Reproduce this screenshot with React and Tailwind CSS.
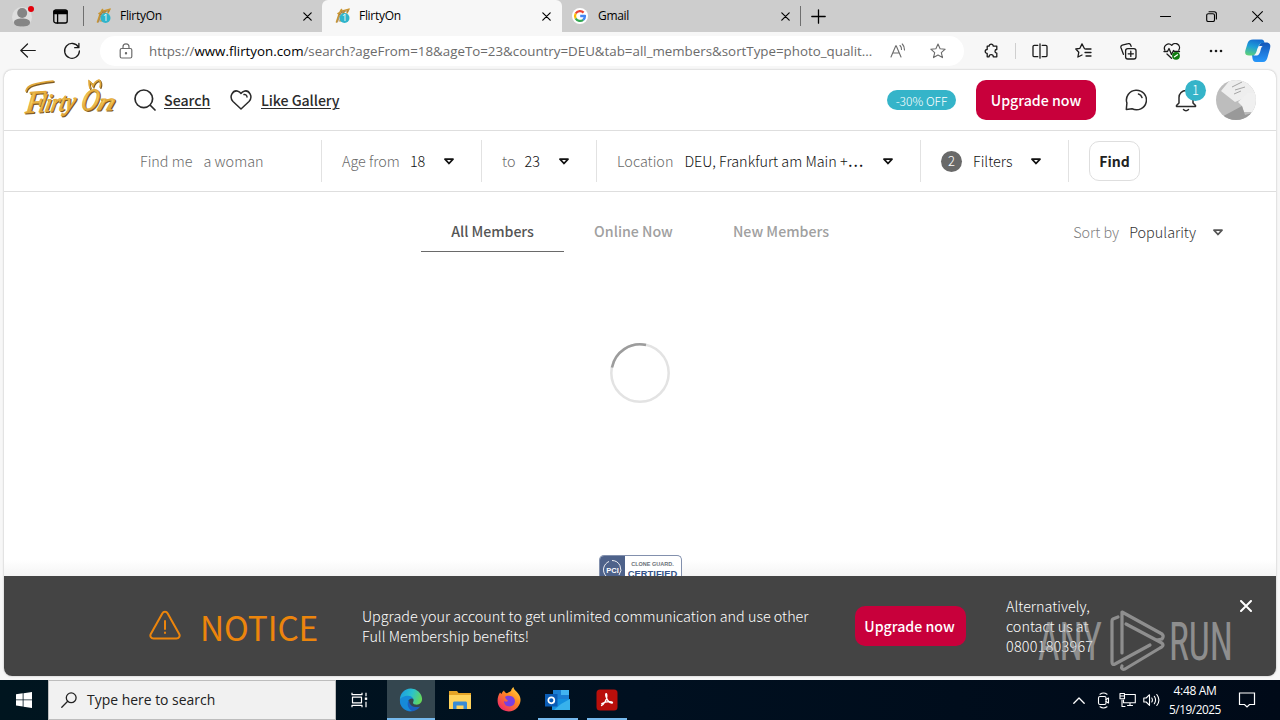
import React from 'react';

const CJK = "font-['Noto_Sans_CJK_JP','Noto_Sans',sans-serif]";
const UI = "font-['Open_Sans','Noto_Sans',sans-serif]";

function Svg({ w, h = w, vb, className = '', children, sw = 1.3 }) {
  return (
    <svg width={w} height={h} viewBox={vb || `0 0 ${w} ${h}`} fill="none" stroke="currentColor" strokeWidth={sw} strokeLinecap="round" strokeLinejoin="round" className={`shrink-0 ${className}`}>
      {children}
    </svg>
  );
}

function CloseX({ className = '' }) {
  return (
    <Svg w={9} sw={1.2} className={className}>
      <path d="M.8.8l7.4 7.4M8.2.8L.8 8.2" />
    </Svg>
  );
}

function Favicon() {
  return (
    <Svg w={16} sw={1.6}>
      <path d="M1.5 14C3 10 4 5 6.500 1.500M3 5.500C6 3 9 2 13 1.500M5 13C6 9 7 7 9 4M12 5l2-4" stroke="#c99532" />
      <path d="M2.600 14C4 10 5 6 7.500 3M4 7C7 4 10 3 13 3" stroke="#8b6a36" strokeWidth=".7" />
      <circle cx="9.500" cy="10" r="5" fill="#2fb4cb" stroke="none" />
      <text x="9.500" y="13.200" fill="#fff" stroke="none" fontSize="9" fontFamily="Open Sans" textAnchor="middle">1</text>
    </Svg>
  );
}

function GoogleMark() {
  return (
    <Svg w={16} sw={2.300}>
      <circle cx="8" cy="8" r="8" fill="#fff" stroke="none" />
      <g strokeLinecap="butt">
        <path d="M11.600 4.600A5 5 0 0 0 3.700 5.500" stroke="#ea4335" />
        <path d="M3.700 5.500A5 5 0 0 0 3.700 10.500" stroke="#fbbc05" />
        <path d="M3.700 10.500A5 5 0 0 0 11.200 11.800" stroke="#34a853" />
        <path d="M11.200 11.800A5 5 0 0 0 13 8H8.200" stroke="#4285f4" />
      </g>
    </Svg>
  );
}

function TabStrip() {
  return (
    <div className={`flex h-8 shrink-0 bg-[#cdcdcd] text-xs tracking-[-.3px] text-black ${UI}`}>
      <div className="flex w-[84px] shrink-0 items-center pl-3">
        <Svg w={24} h={22} sw={0} className="-mt-px">
          <circle cx="10" cy="12" r="10" fill="#dedede" />
          <circle cx="10.200" cy="8" r="5" fill="#858585" />
          <path d="M2 17.500c0-3 3.500-4 8-4s8 1 8 4-3.500 4-8 4-8-1-8-4z" fill="#858585" />
          <circle cx="19" cy="4" r="3" fill="#e3000b" />
        </Svg>
        <Svg w={15} className="ml-[17px]" sw={1.300}>
          <rect x=".8" y="1" width="13.400" height="13" rx="2" />
          <path d="M1 2h13v2.600H1z" fill="currentColor" />
          <path d="M4.600 5v9" />
        </Svg>
        <div className="ml-[15px] h-5 w-px bg-[#6f6f6f]" />
      </div>
      <div className="flex w-[238px] shrink-0 items-center pr-[10px] pl-3">
        <Favicon />
        <span className="ml-2 flex-1">FlirtyOn</span>
        <CloseX />
      </div>
      <div className="flex w-[240px] shrink-0 items-center rounded-t-md bg-[#f7f7f7] pr-[11px] pl-[13px]">
        <Favicon />
        <span className="ml-2 flex-1">FlirtyOn</span>
        <CloseX />
      </div>
      <div className="flex w-[238px] shrink-0 items-center pr-[10px] pl-[10px]">
        <GoogleMark />
        <span className="ml-[10px] flex-1">Gmail</span>
        <CloseX />
      </div>
      <div className="flex flex-1 items-center">
        <div className="h-5 w-px bg-[#6f6f6f]" />
        <Svg w={15} className="ml-[10px]"><path d="M7.500.8v13.400M.8 7.500h13.400" /></Svg>
        <div className="ml-auto flex items-center pr-[17px]">
          <Svg w={11} sw={1.100}><path d="M.500 5.500h10" /></Svg>
          <Svg w={11} sw={1.100} className="ml-[35px]">
            <rect x=".7" y="2.700" width="7.800" height="7.800" rx="1.600" />
            <path d="M3 .7h5.200a2.200 2.200 0 0 1 2.200 2.200v5" />
          </Svg>
          <Svg w={11} sw={1.100} className="ml-[35px]"><path d="M.600.600l9.800 9.800M10.400.600L.600 10.400" /></Svg>
        </div>
      </div>
    </div>
  );
}

const STAR = 'M8 1l2.100 4.700 5.100.5-3.900 3.400 1.200 5L8 12l-4.500 2.600 1.200-5L.8 6.200l5.100-.5z';

function Toolbar() {
  return (
    <div className="flex h-[38px] shrink-0 items-center bg-[#f7f7f7] text-[#1b1b1b]">
      <Svg w={16} className="ml-5" sw={1.200}><path d="M15.300 7.500H1M7.500 1L.8 7.500 7.500 14" /></Svg>
      <Svg w={18} className="ml-[27px]"><path d="M15.500 5.300A7.400 7.400 0 1 0 16.400 9M15.900 1.500v4.200h-4.200" /></Svg>
      <div className="ml-[19px] flex h-[30px] w-[864px] items-center rounded-full bg-white pl-[19px] text-[#6b6b6b]">
        <Svg w={14} h={16} sw={1.200}>
          <rect x="1.200" y="5.500" width="11.600" height="9.500" rx="1.500" />
          <path d="M4 5.500V3.800a3 3 0 0 1 6 0v1.700" />
          <circle cx="7" cy="10.200" r=".6" fill="currentColor" />
        </Svg>
        <span className={`ml-4 w-[725px] text-[13.34px] whitespace-nowrap ${UI}`}>https://<span className="text-black">www.flirtyon.com</span>/search?ageFrom=18&amp;ageTo=23&amp;country=DEU&amp;tab=all_members&amp;sortType=photo_qualit...</span>
        <Svg w={16} className="ml-4" sw={1.100}>
          <path d="M1 14L5.800 2.800h.4L11 14M2.700 10h6.600M10 2.500a5 5 0 0 1 1.500 4M12.300 1a8 8 0 0 1 2.200 6" />
        </Svg>
        <Svg w={16} className="ml-6" sw={1.100}><path d={STAR} /></Svg>
      </div>
      <Svg w={16} className="ml-[19px]">
        <path d="M4.200 3.200h1.900a2.100 2.100 0 1 1 4.200 0h3.500V6.500a1.800 1.800 0 1 0 0 3.600v3.700h-3.500a2.100 2.100 0 1 0-4.200 0H4.200v-3.300a2 2 0 1 1 0-4z" />
      </Svg>
      <div className="ml-4 h-4 w-px bg-[#cfcfcf]" />
      <Svg w={16} className="ml-4"><path d="M5.800 2.300H2.300a1.300 1.300 0 0 0-1.300 1.300v8.800a1.300 1.300 0 0 0 1.300 1.300h3.500M10.200 2.300h3.500a1.300 1.300 0 0 1 1.300 1.300v8.800a1.300 1.300 0 0 1-1.300 1.300h-3.500M8 .8v14.400" /></Svg>
      <Svg w={17} h={16} className="ml-[27px]"><path d="M9.500 5.700L7 .9 4.900 5.300.8 6l3 3.200-.9 4.800L7 12M10.500 6h5.500M10 9.500h6M11 13h5" /></Svg>
      <Svg w={17} className="ml-7">
        <rect x="5.600" y="5.600" width="10.400" height="10.400" rx="2.200" />
        <path d="M10.800 8.200v5.200M8.200 10.800h5.200M3.400 11.300L1 4.700a2 2 0 0 1 1.200-2.500l6-1.500a2 2 0 0 1 2.500 1.400l.4 1.200" />
      </Svg>
      <Svg w={18} h={17} className="ml-[26px]">
        <path d="M1.800 7A4.200 4.200 0 0 1 8.700 2.400 4.200 4.200 0 0 1 15.800 7M1 8.500h3.500l1.500-3 2.500 6 2-4 .8 1h5.200M4 11l4.500 4.300" />
        <circle cx="13" cy="12.800" r="3.900" fill="#107c10" stroke="none" />
        <path d="M11.500 13.800l3-2" stroke="#fff" />
      </Svg>
      <Svg w={14} h={4} className="ml-7" sw={0}>
        <g fill="currentColor"><circle cx="2" cy="2" r="1.300" /><circle cx="7" cy="2" r="1.300" /><circle cx="12" cy="2" r="1.300" /></g>
      </Svg>
      <Svg w={26} className="ml-[22px]" sw={0}>
        <defs>
          <linearGradient id="cpa" x1=".5" y1="0" x2=".2" y2="1"><stop offset="0" stopColor="#176fd0" /><stop offset=".45" stopColor="#1f9fd8" /><stop offset="1" stopColor="#5fd277" /></linearGradient>
          <linearGradient id="cpb" x1="0" y1="0" x2="0" y2="1"><stop offset="0" stopColor="#1556b8" /><stop offset="1" stopColor="#2797fa" /></linearGradient>
        </defs>
        <path d="M18 24h-7c-2.500 0-3-1.500-3.500-3.500L7 17c2.500 0 4.500-1.500 5.500-4.500L14 8c.6-2 2-3.500 4-3.500h3c4 0 5 2.500 4 6l-2.500 9c-.7 2.500-2 4.500-4.500 4.500z" fill="url(#cpb)" />
        <path d="M8 1.500h8.500c2 0 2.700 1.500 3 3.500h-1.500c-2.500 0-4 1.500-4.700 4l-1.300 4.500c-.8 2.500-2.500 4-5 4H4c-3.500 0-4.500-2.300-3.500-5.500l2-6.500C3.300 3 5 1.500 8 1.500z" fill="url(#cpa)" />
        <path d="M14.500 8h3.200c-1.500 1-1.600 2.500-2.200 4.500-.8 2.800-1.500 4.500-3.500 5H8.500c2.200-1 2.800-3 3.500-5.500.6-2 1-3.200 2.500-4z" fill="#f7f7f7" />
      </Svg>
    </div>
  );
}

function LogoWords({ fill, stroke, sw }) {
  return (
    <g fontFamily="Liberation Serif, serif" fontStyle="italic" fill={fill} stroke={stroke} strokeWidth={sw} strokeLinejoin="round">
      <text transform="translate(1 34) rotate(-4) skewX(-10)" fontSize="31">F</text>
      <text transform="translate(14 33) rotate(-4) skewX(-16)" fontSize="25" textLength="36" lengthAdjust="spacingAndGlyphs">lirty</text>
      <text transform="translate(56 31) skewX(-12)" fontSize="31" textLength="17" lengthAdjust="spacingAndGlyphs">O</text>
      <text transform="translate(72 31) skewX(-18)" fontSize="24" textLength="17" lengthAdjust="spacingAndGlyphs">n</text>
    </g>
  );
}

function Logo() {
  return (
    <svg width="92" height="42" viewBox="0 0 92 42" className="shrink-0 overflow-visible">
      <defs>
        <linearGradient id="gold" x1="0" y1="0" x2="0" y2="1"><stop offset="0" stopColor="#e0a836" /><stop offset=".5" stopColor="#f8cf60" /><stop offset="1" stopColor="#c98f25" /></linearGradient>
      </defs>
      <g transform="translate(.9 1)">
        <LogoWords fill="#7d5a24" stroke="#7d5a24" sw="1.200" />
        <path d="M2 12C3 7 9 4 29 2M66 9c-1-2-1-5-1-7 2 1 3 3 4 5 1-3 3-5 6-6 2 2 2 4 1 7" fill="none" stroke="#7d5a24" strokeWidth="1.800" strokeLinecap="round" />
      </g>
      <LogoWords fill="url(#gold)" stroke="#e3ab3b" sw=".9" />
      <path d="M2 12C3 7 9 4 29 2M66 9c-1-2-1-5-1-7 2 1 3 3 4 5 1-3 3-5 6-6 2 2 2 4 1 7" fill="none" stroke="#e0a738" strokeWidth="1.700" strokeLinecap="round" />
    </svg>
  );
}

function SiteHeader() {
  return (
    <div className="flex h-[61px] shrink-0 items-center border-b border-[#dedede] px-5 text-[14.2px] font-medium text-[#2b2b2b]">
      <Logo />
      <Svg w={22} className="ml-[18px]" sw={1.700}><circle cx="9.800" cy="9.800" r="8.800" /><path d="M16.500 16.500l4.500 4.500" /></Svg>
      <span className="ml-2 w-[47px] pt-[2px] underline underline-offset-2">Search</span>
      <Svg w={22} h={20} className="ml-[19px]" sw={1.500}>
        <path d="M11 19L3 11.500C-1.500 6.500 3-.5 8 1.200c1.300.4 2.300 1.300 3 2.300.7-1 1.700-1.900 3-2.300 5-1.700 9.500 5.300 5 10.300zM14 4.500c1.500-.3 3 .8 3 2.500" />
      </Svg>
      <span className="ml-[9px] pt-[2px] tracking-[-.08px] underline underline-offset-2">Like Gallery</span>
      <span className="mr-5 ml-auto flex h-5 w-[69px] items-center justify-center rounded-full bg-[#35b4c9] pt-px text-[12px] font-light text-white">-30% OFF</span>
      <button className="h-10 w-[120px] rounded-[10px] bg-[#c8003b] pt-[2px] text-white">Upgrade now</button>
      <Svg w={22} className="ml-[29px]" sw={1.500}>
        <path d="M1.300 20.500l.6-6.500A10 9.800 0 1 1 7 19.800zM13.500 5c1.800.5 3 1.800 3.500 3.500" />
      </Svg>
      <div className="relative ml-7">
        <Svg w={22} h={24} className="mt-[1px]" sw={1.500}>
          <path d="M4 14V8.500a7 7 0 0 1 14 0V14l2.500 2.500v1H1.500v-1zM8.500 20.500c1.300 1.500 3.700 1.500 5 0" />
        </Svg>
        <span className="absolute -top-[8px] left-[10px] flex size-[21px] items-center justify-center rounded-full bg-[#35b4c9] text-[13px] font-light text-white">1</span>
      </div>
      <svg width="40" height="40" viewBox="0 0 40 40" className="ml-[19px] shrink-0">
        <defs><clipPath id="av"><circle cx="20" cy="20" r="20" /></clipPath></defs>
        <g clipPath="url(#av)">
          <path d="M0 0h40v40H0z" fill="#bdbdbd" />
          <path d="M5 11L14 0h26v18l-9-1-12 5z" fill="#eeeeee" />
          <path d="M22 22l10-9h9v19H28l-2-6z" fill="#f0f0f0" />
          <path d="M0 40l26-14 3 9 11-3v8z" fill="#999" />
          <path d="M16 7l10-5M19 10l10-3M18 14l7-3" stroke="#a4a4a4" strokeWidth="1" />
        </g>
      </svg>
    </div>
  );
}

function Caret({ className = '' }) {
  return (
    <Svg w={10} h={7} sw={1.800} className={className}><path d="M1 1.200h8L5 5.500z" /></Svg>
  );
}

function FilterBar() {
  return (
    <div className="flex h-[61px] shrink-0 items-center border-b border-[#dedede] pl-[136px] text-[14.4px] font-light text-[#111]">
      <div className="flex h-[42px] w-[182px] items-center gap-[11px] border-r border-[#e2e2e2] text-[#6a6a6a]">
        <span>Find me</span><span>a woman</span>
      </div>
      <div className="flex h-[42px] w-40 items-center border-r border-[#e2e2e2] pl-5">
        <span className="text-[#6a6a6a]">Age from</span><span className="ml-[10px]">18</span><Caret className="ml-[19px]" />
      </div>
      <div className="flex h-[42px] w-[115px] items-center border-r border-[#e2e2e2] pl-5">
        <span className="text-[#6a6a6a]">to</span><span className="ml-[9px]">23</span><Caret className="ml-[19px]" />
      </div>
      <div className="flex h-[42px] w-[324px] items-center border-r border-[#e2e2e2] pl-5">
        <span className="text-[#6a6a6a]">Location</span><span className="ml-[11px] w-[180px] whitespace-nowrap">DEU, Frankfurt am Main +<span className="font-medium">⋯</span></span><Caret className="ml-[19px]" />
      </div>
      <div className="flex h-[42px] w-[148px] items-center border-r border-[#e2e2e2] pl-5">
        <span className="flex size-[21px] items-center justify-center rounded-full bg-[#696969] text-[13px] text-white">2</span>
        <span className="ml-[11px]">Filters</span><Caret className="ml-[19px]" />
      </div>
      <button className="ml-5 h-10 w-[51px] rounded-[10px] border border-[#dedede] text-[14px] font-bold text-[#222]">Find</button>
    </div>
  );
}

function Members() {
  return (
    <div className="flex min-h-0 flex-1 flex-col">
      <div className="flex h-[60px] shrink-0 items-end pr-[53px] pl-[417px] text-[14.2px] font-medium text-[#a0a0a0]">
        <span className="flex h-10 w-[143px] items-center justify-center border-b border-[#6a6a6a] tracking-[-.05px] text-[#555]">All Members</span>
        <span className="flex h-10 w-[139px] items-center justify-center">Online Now</span>
        <span className="flex h-10 w-[156px] items-center justify-center">New Members</span>
        <div className="ml-auto flex h-10 items-center text-[14.4px] font-light text-[#333]">
          <span className="text-[#808080]">Sort by</span><span className="ml-[10px]">Popularity</span><Caret className="mt-px ml-[17px] text-[#555]" />
        </div>
      </div>
      <div className="flex min-h-0 flex-1 flex-col items-center bg-linear-to-b from-white from-95% to-[#f4f4f4]">
        <svg width="60" height="60" viewBox="0 0 60 60" fill="none" strokeWidth="2.500" className="mt-[91px] shrink-0">
          <circle cx="30" cy="30" r="28.700" stroke="#e3e3e3" />
          <path d="M2 24.500A28.700 28.700 0 0 1 36 2" stroke="#9c9c9c" />
        </svg>
        <div className="mt-[152px] flex h-[21px] w-[83px] shrink-0 overflow-hidden rounded-t-[5px] border border-b-0 border-[#8290ad] bg-white">
          <div className="w-[25px] shrink-0 bg-[#4e628a]">
            <svg width="25" height="21" viewBox="0 0 25 21">
              <path d="M6 20A9 9 0 0 1 9 5.500M12 4.500A9 9 0 0 1 19 19" fill="none" stroke="#fff" strokeWidth=".9" />
              <text x="12.500" y="16.500" fontFamily="Liberation Sans" fontWeight="700" fontSize="7.500" fill="#fff" textAnchor="middle">PCI</text>
            </svg>
          </div>
          <div className="flex flex-1 flex-col items-center pt-[5px] font-['Liberation_Sans',sans-serif] font-bold whitespace-nowrap">
            <span className="text-[5.5px] leading-[7px] text-[#6b7078]">CLONE GUARD.</span>
            <span className="text-[9.4px] leading-[11px] text-[#36548a]">CERTIFIED</span>
          </div>
        </div>
      </div>
    </div>
  );
}

function Notice() {
  return (
    <div className="flex h-[100px] shrink-0 bg-[#444] pl-[145px] text-[14.37px] leading-5 font-light text-white">
      <div className="flex w-[213px] items-center text-[#ec850c]">
        <Svg w={32} h={32} sw={2}>
          <path d="M13.300 3.400c1.200-2.200 4.200-2.200 5.400 0l11.500 20.500c1.200 2.200-.2 4.600-2.700 4.600H4.500c-2.500 0-3.900-2.400-2.700-4.600zM16 11v8M16 22.500v.600" />
        </Svg>
        <span className="ml-[19px] pt-px text-[33.4px] font-normal tracking-[-.1px]">NOTICE</span>
      </div>
      <p className="w-[493px] pt-[30px]">Upgrade your account to get unlimited communication and use other<br />Full Membership benefits!</p>
      <button className="mt-[30px] h-10 w-[111px] shrink-0 rounded-[10px] bg-[#c8003b] pr-[2px] text-[14.2px] font-medium">Upgrade now</button>
      <p className="ml-10 w-[110px] shrink-0 pt-5">Alternatively,<br />contact us at<br /><span className="tracking-[.25px]">08001803967</span></p>
      <Svg w={12} sw={2} className="mt-6 mr-[24px] ml-auto"><path d="M1 1l10 10M11 1L1 11" /></Svg>
    </div>
  );
}

function TaskIcon({ children, open, className = '' }) {
  return (
    <div className={`flex h-10 flex-col items-center ${className}`}>
      <div className="flex flex-1 items-center justify-center pt-[2px]">{children}</div>
      <div className={open ? 'h-[2px] w-10 bg-[#76b9ed]' : 'h-[2px]'} />
    </div>
  );
}

function Taskbar() {
  return (
    <div className={`flex h-10 shrink-0 items-center bg-linear-to-r from-[#00151f] via-[#001020] to-[#000a18] text-white ${UI}`}>
      <TaskIcon className="w-12">
        <Svg w={16} sw={0}><path d="M0 2.300L6.700 1.300v6.200H0zM7.500 1.200L16 0v7.500H7.500zM0 8.300h6.700v6.300L0 13.600zM7.500 8.300H16V16l-8.500-1.300z" fill="#fff" /></Svg>
      </TaskIcon>
      <div className="flex h-10 w-72 items-center border border-[#bdbdbd] bg-[#f1f1f1] pl-3 text-[#222]">
        <Svg w={16}><circle cx="10.200" cy="5.800" r="4.900" /><path d="M6.700 9.300L.8 15.200" /></Svg>
        <span className="ml-[10px] pt-px text-[13.95px]">Type here to search</span>
      </div>
      <TaskIcon className="w-[51px] pr-1">
        <Svg w={17} h={16} sw={1.200}>
          <path d="M1 .7v2h10v-2M1 15.300v-2h10v2M1.500 5.200h9v5.600h-9zM15 .7v3.500M15 9.800v5.500" strokeLinecap="butt" /><path d="M13.800 5.500h2.400v2.400h-2.400z" fill="#fff" stroke="none" />
        </Svg>
      </TaskIcon>
      <div className="flex h-10 w-12 items-center justify-center border-b-2 border-[#76b9ed] bg-[#34464f] pt-[2px]">
        <Svg w={24} vb="0 0 26 26" sw={0}>
          <defs><linearGradient id="edg" x1="0" y1=".3" x2="1" y2=".6"><stop offset="0" stopColor="#1c9de0" /><stop offset=".5" stopColor="#2bc2cc" /><stop offset="1" stopColor="#66d856" /></linearGradient></defs>
          <path d="M1 13A12 12 0 0 0 23 20c-6 2-12-1-12-6z" fill="#1b5fc0" />
          <path d="M1 14C1 9 6 6.500 10 7c4 .4 6 3 6 5.500-1.500-2-5-1-6 1.500-1.500 4 0 8.500 4 10.700C7 26 1 20.500 1 14z" fill="#168ad8" />
          <path d="M1 13A12 12 0 0 1 25 12c0 4-3 6.500-7 6-2.500-.3-3.500-1.500-2.500-3C17 12 14 8.500 10 8.500 5.500 8.500 2 10.500 1 13z" fill="url(#edg)" />
        </Svg>
      </div>
      <TaskIcon className="w-[50px]">
        <Svg w={22} h={20} sw={0}>
          <path d="M0 1h8l1.500 2H22v4H0z" fill="#e5a426" /><path d="M0 5h22v14H0z" fill="#ffd35c" />
          <path d="M4 19v-6c0-1 .7-1.500 1.500-1.500h11c.8 0 1.500.500 1.500 1.500v6h-3.500v-3.500h-7V19z" fill="#388bd5" />
        </Svg>
      </TaskIcon>
      <TaskIcon className="w-12 pb-px">
        <Svg w={24} h={25} sw={0}>
          <defs><linearGradient id="fx" x1="1" y1="0" x2=".2" y2="1"><stop offset="0" stopColor="#ffe14a" /><stop offset=".45" stopColor="#ff8a1f" /><stop offset="1" stopColor="#f0256b" /></linearGradient></defs>
          <path d="M14 4c.3-1.800 1.300-3 2.500-4 .3 3 3 4 5 7 3.500 5 2 10-1 13.500-5 5.500-14 5-18-.5C-.5 15.500.3 9.500 3 5.500L4.500 7c.500-1.500 1.200-2.500 2.500-3.500C7.500 5 8.500 6 10 6.300z" fill="url(#fx)" />
          <path d="M8 10c2-2 8-2 9.500 2s-1 7.500-5 7.500S7 16.500 7 14c1 1 3 1 4-.3-1-.7-2.500-1.700-3-3.700z" fill="#7a3fe0" />
        </Svg>
      </TaskIcon>
      <TaskIcon className="w-[50px]" open>
        <Svg w={26} h={22} sw={0}>
          <path d="M8 1h16v10H8z" fill="#1a7fd4" /><path d="M16 1h8v5h-8z" fill="#41b4f2" /><path d="M7 10h18v11H7z" fill="#1390e0" /><path d="M16 15l9-5v11H9z" fill="#38b2ec" /><path d="M0 5h12.500v12.500H0z" fill="#0a5cb5" />
          <circle cx="6.300" cy="11.300" r="3" fill="none" stroke="#fff" strokeWidth="1.700" />
        </Svg>
      </TaskIcon>
      <TaskIcon className="w-12" open>
        <Svg w={22} sw={0}>
          <rect x=".5" y=".5" width="21" height="21" rx="3.500" fill="#b90f0b" />
          <path d="M5.500 16.500c2-.3 5-5.500 5.300-8.500.2-2-.1-3.300-.6-3.300-1.300 0 0 5 2.300 7.600 1.500 1.700 4 2.300 4 1.200S11 12 5.800 14.700" fill="none" stroke="#fff" strokeWidth="1.300" />
        </Svg>
      </TaskIcon>
      <div className="ml-auto flex items-center">
        <Svg w={12} h={7}><path d="M.8 6.200L6 1l5.200 5.200" /></Svg>
        <Svg w={13} h={17} className="ml-3" sw={1.100}>
          <rect x="1.500" y="4.500" width="7.500" height="8" rx="1.500" /><path d="M9 7.500l2.500-1.500v5L9 9.500M3 2.200C5 .8 8 .8 10 2.200M3 14.800c2 1.400 5 1.400 7 0" />
        </Svg>
        <Svg w={17} h={16} className="ml-[9px]" sw={1.100}>
          <path d="M6.500 2.500h9.800v8.300H4.500V8M8.500 13.500h5M11 11v2.500M3 8v6.500h3" /><path d="M1 1.500h4.500v5.200H1zM1.500 4h4" />
        </Svg>
        <Svg w={17} h={14} className="ml-[7px]" sw={1.100}>
          <path d="M.8 5v4h2.400L6.500 12.300V1.700L3.200 5zM8.800 5c.8 1.300.8 2.700 0 4M11.300 3.300c1.700 2.500 1.700 4.900 0 7.400M13.800 1.500c2.700 3.500 2.700 7.500 0 11" />
        </Svg>
        <div className="ml-[9px] flex w-[52px] flex-col items-center text-[12px] leading-[18px] tracking-[-.35px] whitespace-nowrap">
          <span>4:48 AM</span><span className="text-[11.8px] tracking-[-.45px]">5/19/2025</span>
        </div>
        <Svg w={18} className="mr-6 ml-[17px]" sw={1.200}><path d="M1.500 2h15v11.500h-5L9 16l-2.500-2.500h-5z" strokeLinejoin="miter" /></Svg>
      </div>
    </div>
  );
}

function Watermark() {
  return (
    <svg width="200" height="70" viewBox="0 0 200 70" className="pointer-events-none absolute top-[606px] left-[1035px] opacity-60">
      <g fontFamily="Roboto Condensed, Roboto, sans-serif" fontWeight="400" fontSize="53" fill="#c0c0c0">
        <text x="3" y="53.500" textLength="64" lengthAdjust="spacingAndGlyphs">ANY</text>
        <text x="134" y="53.500" textLength="64" lengthAdjust="spacingAndGlyphs">RUN</text>
      </g>
      <g fill="none" stroke="#c0c0c0" strokeWidth="3.200" strokeLinejoin="round" strokeLinecap="round">
        <path d="M87 47V6l40 22c2 2 1 4 0 5l-5 1" />
        <path d="M83 11l-5 2c-1 .5-1 1-1 2v41c0 2 1 3 3 2l35-19" />
        <path d="M91 18l34 18c4 2 4 4 0 6L90 63c-3 1-4-1-3-3" />
      </g>
    </svg>
  );
}

export default function App() {
  return (
    <div className="relative flex h-[720px] w-[1280px] flex-col overflow-hidden bg-[#f7f7f7]">
      <TabStrip />
      <Toolbar />
      <main className={`mx-1 mb-1 flex min-h-0 flex-1 flex-col overflow-hidden rounded-lg bg-white shadow-[0_0_2px_#aaa] ${CJK}`}>
        <SiteHeader />
        <FilterBar />
        <Members />
        <Notice />
      </main>
      <Taskbar />
      <Watermark />
    </div>
  );
}
